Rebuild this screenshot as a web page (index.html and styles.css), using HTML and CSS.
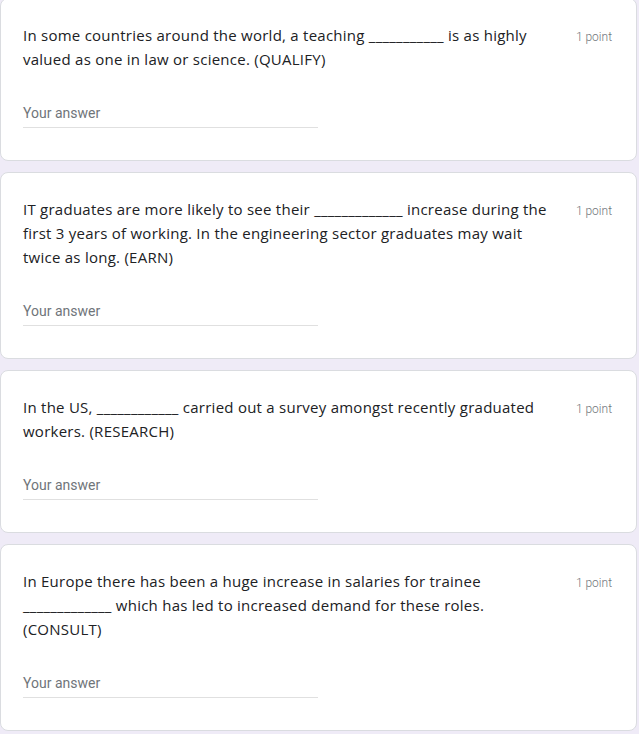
FILE: index.html
```html
<!DOCTYPE html>
<html lang="en">
<head>
<meta charset="utf-8">
<title>Quiz</title>
<link rel="stylesheet" href="styles.css">
</head>
<body>
<main class="form">
  <section class="card">
    <div class="head">
      <div class="title">In some countries around the world, a teaching ___________ is as highly valued as one in law or science. (QUALIFY)</div>
      <div class="points">1 point</div>
    </div>
    <div class="answer">Your answer</div>
  </section>
  <section class="card">
    <div class="head">
      <div class="title">IT graduates are more likely to see their _____________ increase during the first 3 years of working. In the engineering sector graduates may wait twice as long. (EARN)</div>
      <div class="points">1 point</div>
    </div>
    <div class="answer">Your answer</div>
  </section>
  <section class="card">
    <div class="head">
      <div class="title">In the US, ____________ carried out a survey amongst recently graduated workers. (RESEARCH)</div>
      <div class="points">1 point</div>
    </div>
    <div class="answer">Your answer</div>
  </section>
  <section class="card">
    <div class="head">
      <div class="title">In Europe there has been a huge increase in salaries for trainee _____________ which has led to increased demand for these roles. (CONSULT)</div>
      <div class="points">1 point</div>
    </div>
    <div class="answer">Your answer</div>
  </section>
</main>
</body>
</html>
```
FILE: styles.css
```css
html, body {
  margin: 0;
  padding: 0;
  background: #efebf7;
}
.form {
  display: flex;
  flex-direction: column;
  gap: 11px;
  margin-top: -2px;
  width: 637px;
}
.card {
  background: #fff;
  border: 1px solid #dadce0;
  border-radius: 8px;
  padding: 24px 24px 32px 22px;
}
.head {
  display: flex;
  align-items: flex-start;
  gap: 16px;
}
.title {
  flex: 1;
  font-family: "Open Sans", sans-serif;
  font-size: 15px;
  letter-spacing: 0.25px;
  line-height: 24px;
  color: #202124;
}
.points {
  padding-top: 2px;
  font-family: Roboto, sans-serif;
  font-size: 12px;
  font-weight: 300;
  line-height: 24px;
  color: #70757a;
  white-space: nowrap;
}
.answer {
  margin-top: 32px;
  width: 295px;
  padding-bottom: 4px;
  border-bottom: 1px solid #e0e0e0;
  font-family: Roboto, sans-serif;
  font-size: 14px;
  line-height: 20px;
  color: #70757a;
}
```
